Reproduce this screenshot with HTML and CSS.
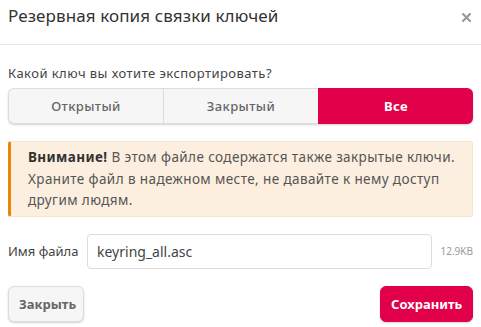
FILE: index.html
```html
<!DOCTYPE html>
<html lang="ru">
<head>
<meta charset="utf-8">
<link rel="stylesheet" href="styles.css">
</head>
<body>
<div class="modal">
  <div class="header">
    <h1 class="title">Резервная копия связки ключей</h1>
    <svg class="close" width="9" height="9" viewBox="0 0 9 9"><path d="M1 1 L8 8 M8 1 L1 8" stroke="#9a9a9a" stroke-width="2.2" stroke-linecap="square"/></svg>
  </div>
  <div class="body">
    <p class="question">Какой ключ вы хотите экспортировать?</p>
    <div class="segments">
      <button class="seg">Открытый</button>
      <button class="seg">Закрытый</button>
      <button class="seg active">Все</button>
    </div>
    <div class="alert"><b>Внимание!</b> В этом файле содержатся также закрытые ключи. Храните файл в надежном месте, не давайте к нему доступ другим людям.</div>
    <div class="file-row">
      <label class="file-label">Имя файла</label>
      <div class="file-input">keyring_all.asc</div>
      <span class="size">12.9KB</span>
    </div>
    <div class="footer">
      <button class="btn">Закрыть</button>
      <button class="btn primary">Сохранить</button>
    </div>
  </div>
</div>
</body>
</html>
```
FILE: styles.css
```css
* { box-sizing: border-box; }
html, body { margin: 0; padding: 0; background: #fff; }
body { font-family: "Noto Sans", "DejaVu Sans", sans-serif; color: #333; width: 481px; height: 327px; overflow: hidden; }
.modal { width: 481px; }
.header { height: 45px; border-bottom: 1px solid #e8e8e8; display: flex; justify-content: space-between; align-items: flex-start; padding: 4px 10px 0 8px; }
.title { margin: 0; font-size: 17px; font-weight: 400; color: #333; line-height: 24px; letter-spacing: 0.1px; }
.close { margin-top: 9px; }
.body { padding: 0 8px; }
.question { margin: 18px 0 0; font-size: 13px; line-height: 20px; color: #444; letter-spacing: 0.45px; }
.segments { display: flex; margin-top: 5px; height: 36px; border-radius: 6px; box-shadow: 0 1px 2px rgba(0,0,0,0.18); }
.seg { flex: 1; font-family: inherit; font-size: 13px; font-weight: 500; color: #666; background: #f6f6f6; border: 1px solid #ddd; border-right: none; margin: 0; padding: 0; letter-spacing: 0.4px; }
.seg:first-child { border-radius: 6px 0 0 6px; }
.seg:last-child { border-radius: 0 6px 6px 0; }
.seg.active { background: #e2004a; color: #fff; font-weight: 700; border-color: #e2004a; }
.alert { margin-top: 17px; background: #fcefdf; border: 1px solid #f7e4cc; border-left: 3px solid #e8860c; border-radius: 3px; padding: 5px 14px 4px 17px; font-size: 13.5px; line-height: 21.5px; color: #555; letter-spacing: 0.4px; }
.alert b { color: #333; }
.file-row { display: flex; align-items: center; margin-top: 17px; }
.file-label { font-size: 13px; color: #444; width: 79px; }
.file-input { flex: 1; height: 35px; border: 1px solid #ddd; border-radius: 4px; padding: 0 9px; display: flex; align-items: center; font-size: 14px; color: #444; }
.size { font-size: 10px; color: #999; margin-left: 8px; }
.footer { display: flex; justify-content: space-between; margin-top: 17px; }
.btn { font-family: inherit; height: 36px; padding: 0 10px; font-size: 13px; font-weight: 700; color: #666; background: #f6f6f6; border: 1px solid #ddd; border-radius: 6px; box-shadow: 0 1px 2px rgba(0,0,0,0.18); width: 76px; }
.btn.primary { background: #e2004a; border-color: #e2004a; color: #fff; width: 93px; }
```
